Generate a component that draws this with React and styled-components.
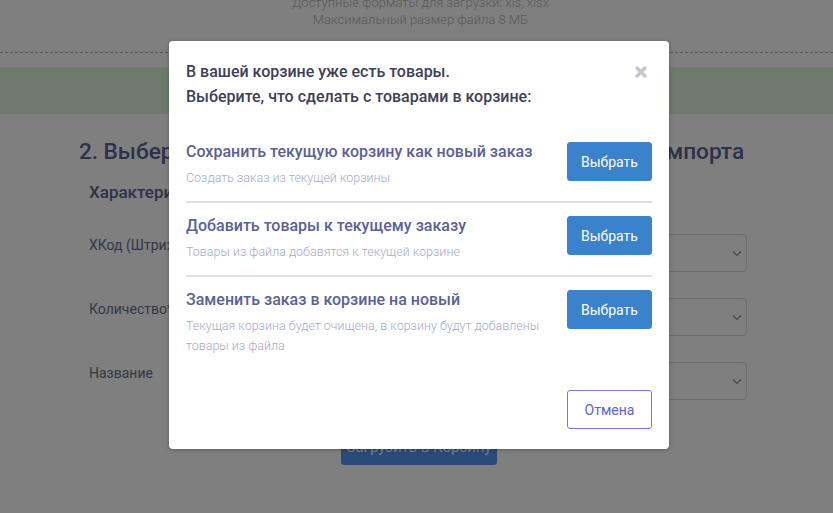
import React from "react";
import styled, { createGlobalStyle } from "styled-components";

const Global = createGlobalStyle`
  html, body { margin: 0; padding: 0; background: #fff; }
  body { font-family: Roboto, "Noto Sans", sans-serif; overflow: hidden; }
  * { box-sizing: border-box; }
`;

const Page = styled.div`
  width: 833px;
  height: 513px;
  overflow: hidden;
  position: relative;
  background: #fff;
`;

const Info = styled.div`
  margin-top: -6px;
  padding-left: 8px;
  text-align: center;
  font-family: Roboto, sans-serif;
  font-weight: 300;
  font-size: 13px;
  line-height: 17px;
  color: #b4b4b4;
`;

const DropZoneEdge = styled.div`
  margin-top: 24px;
  border-bottom: 1px dashed #a6b4a6;
`;

const Notice = styled.div`
  margin-top: 14px;
  height: 47px;
  background: #dcf4d8;
`;

const Heading = styled.h2`
  margin: 23px 0 0;
  padding-right: 10px;
  text-align: center;
  font-family: Roboto, sans-serif;
  font-weight: 500;
  font-size: 22.6px;
  line-height: 30px;
  color: #5c6296;
  white-space: nowrap;
`;

const Form = styled.div`
  padding: 0 86px 0 89px;
`;

const FormTitle = styled.div`
  margin-top: 13px;
  font-weight: 500;
  font-size: 17px;
  line-height: 24px;
  color: #5c6296;
`;

const FieldRow = styled.div`
  display: grid;
  grid-template-columns: 241px 1fr;
  align-items: start;
  margin-top: ${(p) => p.$gap}px;
`;

const Label = styled.div`
  padding-top: 1px;
  font-size: 14px;
  line-height: 20px;
  color: #6a6e8e;
  & b { color: #d04040; font-weight: 400; font-size: 11px; vertical-align: top; }
`;

const SelectBox = styled.div`
  height: 38px;
  border: 1px solid #d8d8dc;
  border-radius: 4px;
  display: flex;
  align-items: center;
  justify-content: flex-end;
  padding-right: 4px;
`;

const Submit = styled.div`
  margin: 28px 0 0 252px;
  width: 156px;
  height: 37px;
  border-radius: 3px;
  background: #5494f8;
  color: #fff;
  font-size: 15px;
  display: flex;
  align-items: center;
  justify-content: center;
`;

const Overlay = styled.div`
  position: absolute;
  inset: 0;
  background: rgba(0, 0, 0, 0.5);
`;

const Modal = styled.div`
  position: absolute;
  top: 41px;
  left: 169px;
  width: 500px;
  background: #fff;
  border-radius: 4px;
  box-shadow: 0 1px 4px rgba(0, 0, 0, 0.25);
  padding: 18px 17px 20px;
`;

const ModalHead = styled.div`
  display: flex;
  justify-content: space-between;
  align-items: flex-start;
`;

const ModalTitle = styled.div`
  font-weight: 500;
  font-size: 16px;
  line-height: 25px;
  color: #3e4056;
`;

const Close = styled.button`
  border: 0;
  background: none;
  padding: 0;
  margin: 7px 5px 0 0;
  width: 12px;
  height: 12px;
  display: flex;
  cursor: pointer;
`;

const Options = styled.div`
  margin-top: 33px;
`;

const Option = styled.div`
  display: flex;
  align-items: flex-start;
  gap: 14px;
  padding: ${(p) => (p.$first ? "0" : "13px")} 0 ${(p) => (p.$last ? "0" : "13px")};
  border-bottom: ${(p) => (p.$last ? "none" : "2px solid #dedde8")};
`;

const OptionText = styled.div`
  flex: 1;
`;

const OptionTitle = styled.div`
  font-weight: 500;
  font-size: 16px;
  line-height: 20px;
  color: #5b6194;
`;

const OptionDesc = styled.div`
  margin-top: 6px;
  font-weight: 300;
  font-size: 12.5px;
  line-height: 20px;
  color: #a7abc4;
`;

const Btn = styled.button`
  flex: none;
  width: 85px;
  height: 39px;
  border-radius: 3px;
  font-family: Roboto, sans-serif;
  font-size: 14px;
  cursor: pointer;
  border: 1px solid ${(p) => (p.$outline ? "#737ad8" : "#3a82cc")};
  background: ${(p) => (p.$outline ? "#fff" : "#3a82cc")};
  color: ${(p) => (p.$outline ? "#5b64cf" : "#fff")};
`;

const Footer = styled.div`
  margin-top: 34px;
  display: flex;
  justify-content: flex-end;
`;

const Chevron = () => (
  <svg width="10" height="7" viewBox="0 0 10 7">
    <path d="M1 1.5 L5 5.5 L9 1.5" fill="none" stroke="#8a8a8a" strokeWidth="1.2" />
  </svg>
);

const CloseIcon = () => (
  <svg width="12" height="12" viewBox="0 0 12 12">
    <path d="M2 2 L10 10 M10 2 L2 10" stroke="#c6c6ce" strokeWidth="3.4" strokeLinecap="round" />
  </svg>
);

const options = [
  { t: "Сохранить текущую корзину как новый заказ", d: "Создать заказ из текущей корзины" },
  { t: "Добавить товары к текущему заказу", d: "Товары из файла добавятся к текущей корзине" },
  {
    t: "Заменить заказ в корзине на новый",
    d: "Текущая корзина будет очищена, в корзину будут добавлены товары из файла",
  },
];

const fields = [
  { l: "ХКод (Штрихкод)", gap: 30 },
  { l: "Количество", req: true, gap: 26 },
  { l: "Название", gap: 26 },
];

export default function App() {
  return (
    <Page>
      <Global />
      <Info>
        Доступные форматы для загрузки: xls, xlsx
        <br />
        Максимальный размер файла 8 МБ
      </Info>
      <DropZoneEdge />
      <Notice />
      <Heading>2. Выберите, какие колонки файла использовать для импорта</Heading>
      <Form>
        <FormTitle>Характеристики</FormTitle>
        {fields.map((f) => (
          <FieldRow key={f.l} $gap={f.gap}>
            <Label>
              {f.l}
              {f.req && <b>*</b>}
            </Label>
            <SelectBox>
              <Chevron />
            </SelectBox>
          </FieldRow>
        ))}
        <Submit>Загрузить в Корзину</Submit>
      </Form>
      <Overlay />
      <Modal>
        <ModalHead>
          <ModalTitle>
            В вашей корзине уже есть товары.
            <br />
            Выберите, что сделать с товарами в корзине:
          </ModalTitle>
          <Close aria-label="Закрыть">
            <CloseIcon />
          </Close>
        </ModalHead>
        <Options>
          {options.map((o, i) => (
            <Option key={o.t} $first={i === 0} $last={i === options.length - 1}>
              <OptionText>
                <OptionTitle>{o.t}</OptionTitle>
                <OptionDesc>{o.d}</OptionDesc>
              </OptionText>
              <Btn>Выбрать</Btn>
            </Option>
          ))}
        </Options>
        <Footer>
          <Btn $outline>Отмена</Btn>
        </Footer>
      </Modal>
    </Page>
  );
}
